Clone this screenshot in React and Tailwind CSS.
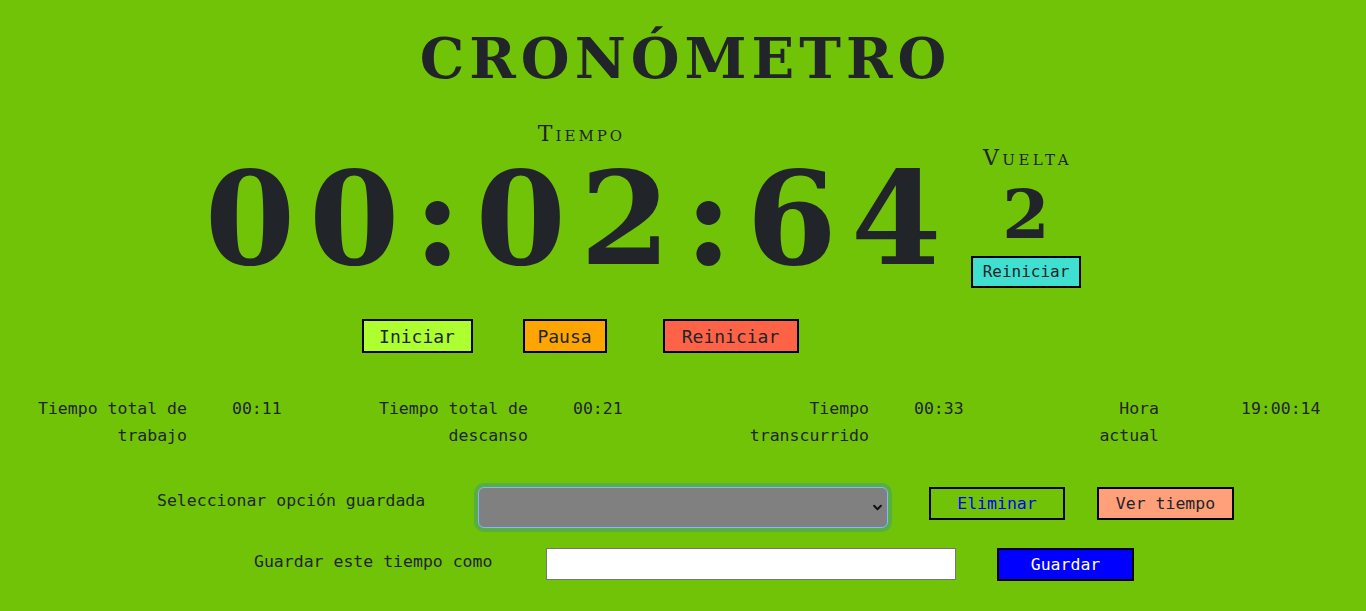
import React, { useState } from "react";

const serif = { fontFamily: '"DejaVu Serif", "Liberation Serif", serif' };
const mono = { fontFamily: '"DejaVu Sans Mono", "Liberation Mono", monospace' };
const smallCaps = { ...serif, fontVariant: "small-caps" };

const stats = [
  { l1: "Tiempo total de", l2: "trabajo", value: "00:11", lw: "w-[187px]", vw: "w-[100px]" },
  { l1: "Tiempo total de", l2: "descanso", value: "00:21", lw: "w-[196px]", vw: "w-[100px]" },
  { l1: "Tiempo", l2: "transcurrido", value: "00:33", lw: "w-[196px]", vw: "w-[100px]" },
  { l1: "Hora", l2: "actual", value: "19:00:14", lw: "w-[145px]", vw: "w-[120px]" },
];

export default function App() {
  const [name, setName] = useState("");

  return (
    <div className="min-h-screen bg-[#71c307] text-[#212529] overflow-hidden">
      {/* Titulo */}
      <h1
        className="pt-[30px] pl-[5px] text-center text-[56px] leading-none font-bold tracking-[5px]"
        style={serif}
      >
        CRONÓMETRO
      </h1>

      {/* Tiempo + vuelta */}
      <div className="flex items-start pl-[204px]">
        <div className="w-[752px] flex flex-col items-center">
          <div className="mt-[37px] h-[22px] text-[22px] leading-none tracking-[3px] pl-[3px]" style={smallCaps}>
            Tiempo
          </div>
          <div className="mt-[9px] h-[130px] text-[130px] leading-none font-bold tracking-[14px]" style={serif}>
            00:02:64
          </div>
          <div className="mt-[35px] flex items-center text-[18px]" style={mono}>
            <button className="w-[111px] h-[34px] bg-[#adff2f] border-2 border-black">Iniciar</button>
            <button className="ml-[50px] w-[84px] h-[34px] bg-[#ffa500] border-2 border-black">Pausa</button>
            <button className="ml-[56px] w-[136px] h-[34px] bg-[#ff6347] border-2 border-black">Reiniciar</button>
          </div>
        </div>

        <div className="ml-[15px] mt-[61px] w-[110px] flex flex-col items-center">
          <div className="h-[22px] text-[22px] leading-none tracking-[3.5px] pl-[3px]" style={smallCaps}>
            Vuelta
          </div>
          <div className="mt-[11px] h-[66px] text-[68px] leading-none font-bold" style={serif}>
            2
          </div>
          <button
            className="mt-[10px] w-[110px] h-[32px] bg-[#40e0d0] border-2 border-black text-[16px]"
            style={mono}
          >
            Reiniciar
          </button>
        </div>
      </div>

      {/* Totales */}
      <div className="mt-[42px] flex items-start text-[16.5px] leading-[27px]" style={mono}>
        {stats.map((s, i) => (
          <div key={i} className="flex items-start">
            <div className={`${s.lw} text-right`}>
              {s.l1}
              <br />
              {s.l2}
            </div>
            <div className={`${s.vw} ${i === 3 ? "ml-[82px]" : "ml-[45px]"}`}>{s.value}</div>
          </div>
        ))}
      </div>

      {/* Seleccionar */}
      <div className="mt-[38px] flex items-start pl-[157px] text-[16.5px] leading-[27px]" style={mono}>
        <div className="w-[321px]">Seleccionar opción guardada</div>
        <div className="relative">
          <select
            className="appearance-none w-[410px] h-[41px] bg-[#808080] rounded-[6px] border border-[#86b7fe] shadow-[0_0_0_4px_rgba(13,110,253,0.25)] outline-none"
            defaultValue=""
          >
            <option value=""></option>
          </select>
          <svg
            className="absolute right-[6px] top-[16px] pointer-events-none"
            width="9"
            height="9"
            viewBox="0 0 16 16"
          >
            <path d="M2 5l6 6 6-6" fill="none" stroke="#111" strokeWidth="3.5" strokeLinecap="round" strokeLinejoin="round" />
          </svg>
        </div>
        <button className="ml-[41px] w-[136px] h-[33px] border-2 border-black text-[#0000ff]">Eliminar</button>
        <button className="ml-[32px] w-[137px] h-[33px] bg-[#ffa07a] border-2 border-black">Ver tiempo</button>
      </div>

      {/* Guardar */}
      <div className="mt-[20px] flex items-start pl-[254px] text-[16.5px] leading-[27px]" style={mono}>
        <div className="w-[292px]">Guardar este tiempo como</div>
        <input
          value={name}
          onChange={(e) => setName(e.target.value)}
          className="w-[410px] h-[32px] bg-white border border-[#767676] outline-none px-2"
        />
        <button className="ml-[41px] w-[137px] h-[33px] bg-[#0000ff] text-white border-2 border-black">
          Guardar
        </button>
      </div>
    </div>
  );
}
